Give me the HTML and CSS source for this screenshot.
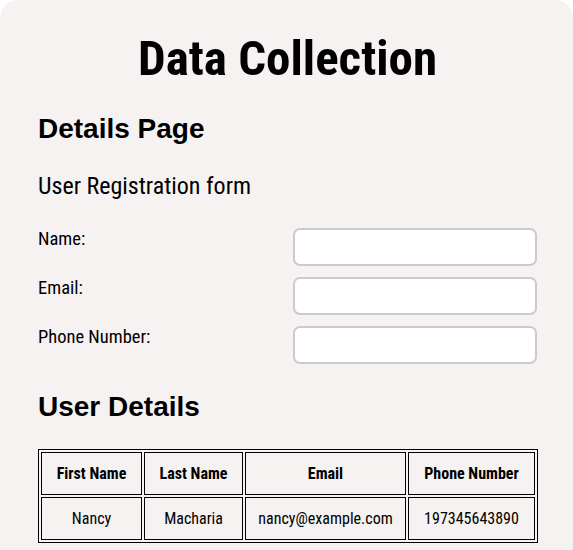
FILE: index.html
```html
<!DOCTYPE html>
<html>
<head>
<meta charset="utf-8">
<link rel="stylesheet" href="styles.css">
</head>
<body>
<div class="page">
  <h1 class="title">Data Collection</h1>
  <h2 class="section">Details Page</h2>
  <p class="subtitle">User Registration form</p>
  <form class="form">
    <div class="row"><label class="label">Name:</label><input class="field" type="text"></div>
    <div class="row"><label class="label">Email:</label><input class="field" type="email"></div>
    <div class="row"><label class="label">Phone Number:</label><input class="field" type="tel"></div>
  </form>
  <h2 class="section section-users">User Details</h2>
  <table class="users">
    <tr><th class="c1">First Name</th><th class="c2">Last Name</th><th class="c3">Email</th><th class="c4">Phone Number</th></tr>
    <tr><td>Nancy</td><td>Macharia</td><td>nancy@example.com</td><td>197345643890</td></tr>
  </table>
</div>
</body>
</html>
```
FILE: styles.css
```css
html, body { margin: 0; padding: 0; background: #ffffff; }
.page {
  background: #f6f2f1;
  border-radius: 18px 18px 0 0;
  padding: 1px 36px 20px 38px;
  min-height: 600px;
  font-family: "Roboto", sans-serif;
  font-stretch: 75%;
  color: #000;
}
.title {
  font-size: 49px;
  font-weight: bold;
  text-align: center;
  margin: 30px 0 0 0;
  line-height: 56px;
}
.section {
  font-family: "Liberation Sans", sans-serif;
  font-stretch: normal;
  font-size: 28px;
  font-weight: bold;
  margin: 26px 0 0 0;
  line-height: 32px;
}
.subtitle {
  font-size: 24px;
  margin: 27px 0 0 0;
  line-height: 28px;
}
.form { margin-top: 28px; display: flex; flex-direction: column; gap: 11px; }
.row { display: flex; justify-content: space-between; align-items: flex-start; }
.label { font-size: 18.5px; line-height: 21px; margin-top: 1px; }
.field {
  width: 244px; height: 38px; box-sizing: border-box;
  border: 2px solid #cdc9c8; border-radius: 7px; background: #fff;
  margin: 0; padding: 0 8px;
}
.section-users { margin-top: 27px; }
.users {
  margin-top: 26px;
  width: 500px;
  border: 1px solid #000;
  border-spacing: 2px;
  font-size: 16px;
}
.users th, .users td { border: 1px solid #000; text-align: center; height: 41px; padding: 0; }
.users td { font-weight: normal; }
.c1 { width: 99px; } .c2 { width: 97px; } .c3 { width: 159px; }
```
